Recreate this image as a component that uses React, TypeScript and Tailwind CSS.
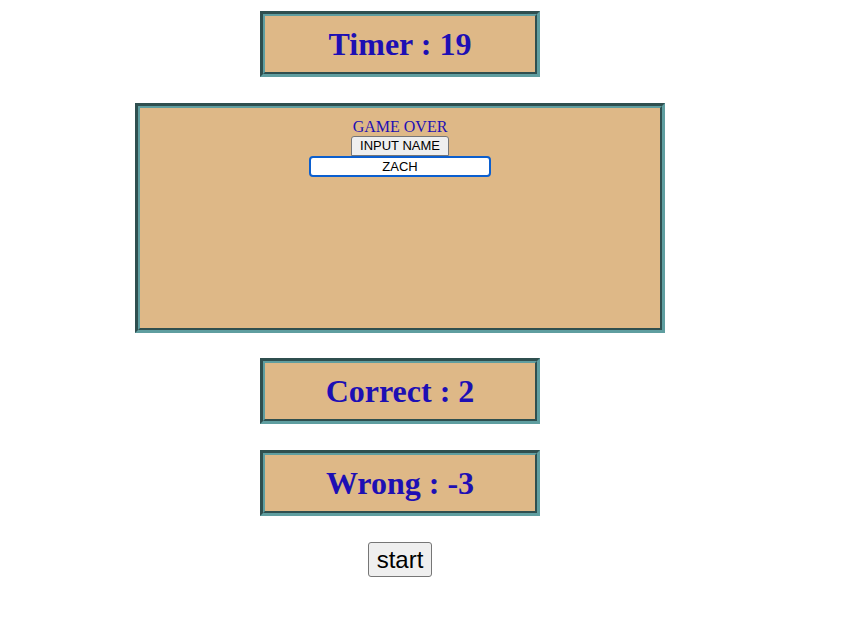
import { useState } from 'react'

function ScoreBox({ label }: { label: string }) {
  return (
    <div className="w-[280px] h-[66px] border-[3px] border-t-[#2f4f4f] border-l-[#2f4f4f] border-b-[#5f9ea0] border-r-[#5f9ea0]">
      <div className="h-full border-2 border-t-[#5f9ea0] border-l-[#5f9ea0] border-b-[#2f4f4f] border-r-[#2f4f4f] bg-[#deb887] flex items-center justify-center">
        <h1 className="font-['Liberation_Serif',serif] font-bold text-[32px] leading-none text-[#1d0fb4]">{label}</h1>
      </div>
    </div>
  )
}

export default function App() {
  const [name, setName] = useState('ZACH')

  return (
    <div className="w-[800px] flex flex-col items-center pt-[11px] bg-white min-h-[622px]">
      <ScoreBox label="Timer : 19" />

      {/* game area */}
      <div className="mt-[26px] w-[530px] h-[230px] border-[3px] border-t-[#2f4f4f] border-l-[#2f4f4f] border-b-[#5f9ea0] border-r-[#5f9ea0]">
        <div className="h-full border-2 border-t-[#5f9ea0] border-l-[#5f9ea0] border-b-[#2f4f4f] border-r-[#2f4f4f] bg-[#deb887] flex flex-col items-center pt-[9px]">
          <p className="font-['Liberation_Serif',serif] text-[16px] leading-[19px] text-[#1d0fb4]">GAME OVER</p>
          <button className="font-['Liberation_Sans',sans-serif] text-[13px] leading-[16px] px-[8px] pt-[1px] pb-[1px] bg-[#efefef] border border-[#767676] rounded-t-[3px] text-black">
            INPUT NAME
          </button>
          <input
            value={name}
            onChange={(e) => setName(e.target.value)}
            className="w-[182px] h-[21px] font-['Liberation_Sans',sans-serif] text-[13px] text-center text-black bg-white border-2 border-[#0b5fcf] rounded-[4px] outline-none"
          />
        </div>
      </div>

      <div className="mt-[25px]">
        <ScoreBox label="Correct : 2" />
      </div>
      <div className="mt-[26px]">
        <ScoreBox label="Wrong : -3" />
      </div>

      <button className="mt-[26px] w-[64px] h-[35px] font-['Liberation_Sans',sans-serif] text-[24px] leading-none bg-[#efefef] border border-[#767676] rounded-[3px] text-black">
        start
      </button>
    </div>
  )
}
